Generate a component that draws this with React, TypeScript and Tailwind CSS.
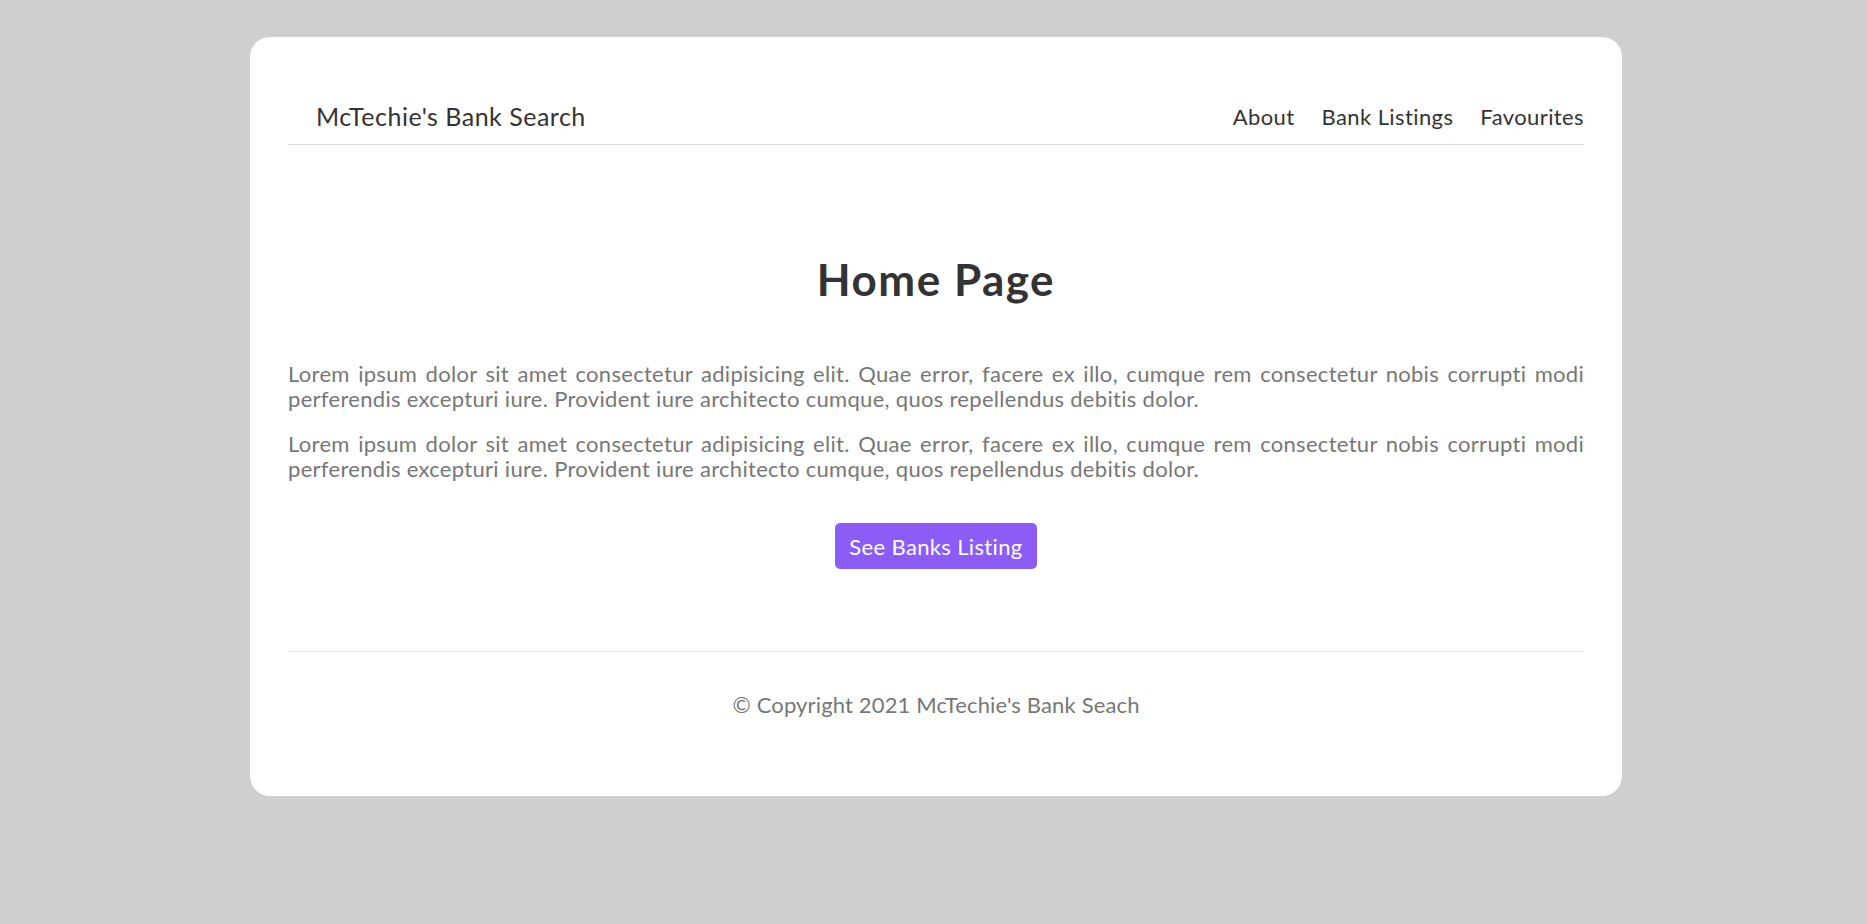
const lorem =
	"Lorem ipsum dolor sit amet consectetur adipisicing elit. Quae error, facere ex illo, cumque rem consectetur nobis corrupti modi perferendis excepturi iure. Provident iure architecto cumque, quos repellendus debitis dolor.";

function Navbar() {
	return (
		<nav className="flex h-[108px] items-end justify-between border-b border-[#dddddd] pb-[13px]">
			<a className="pl-[28px] text-[25px] leading-[30px] tracking-[0.5px] text-[#333333]">McTechie's Bank Search</a>
			<ul className="flex gap-[27px] text-[22px] leading-[28px] tracking-[0.4px] text-[#333333]">
				<li>About</li>
				<li>Bank Listings</li>
				<li>Favourites</li>
			</ul>
		</nav>
	);
}

function Footer() {
	return (
		<footer className="mt-[82px] border-t border-[#e8e8e8] pt-[38px] pb-[76px]">
			<p className="text-center text-[22px] leading-[30px] tracking-[0.15px] text-[#777777]">
				© Copyright 2021 McTechie's Bank Seach
			</p>
		</footer>
	);
}

export default function App() {
	return (
		<div
			className="min-h-screen bg-[#cfcfcf] pt-[37px]"
			style={{ fontFamily: "Lato, 'Open Sans', sans-serif" }}
		>
			<div className="ml-[250px] w-[1372px] rounded-[20px] bg-white px-[38px]">
				<Navbar />

				<main>
					<h1 className="mt-[108px] text-center text-[44px] font-bold leading-[52px] tracking-[1.5px] text-[#333333]">
						Home Page
					</h1>
					<div className="mt-[56px] space-y-[20px] text-justify text-[22px] leading-[25px] tracking-[0.3px] text-[#777777]">
						<p>{lorem}</p>
						<p>{lorem}</p>
					</div>
					<div className="mt-[42px] flex justify-center">
						<button className="h-[46px] rounded-[5px] bg-[#8b5cf6] px-[14px] text-[22px] tracking-[0.35px] text-white">
							See Banks Listing
						</button>
					</div>
				</main>

				<Footer />
			</div>
		</div>
	);
}
